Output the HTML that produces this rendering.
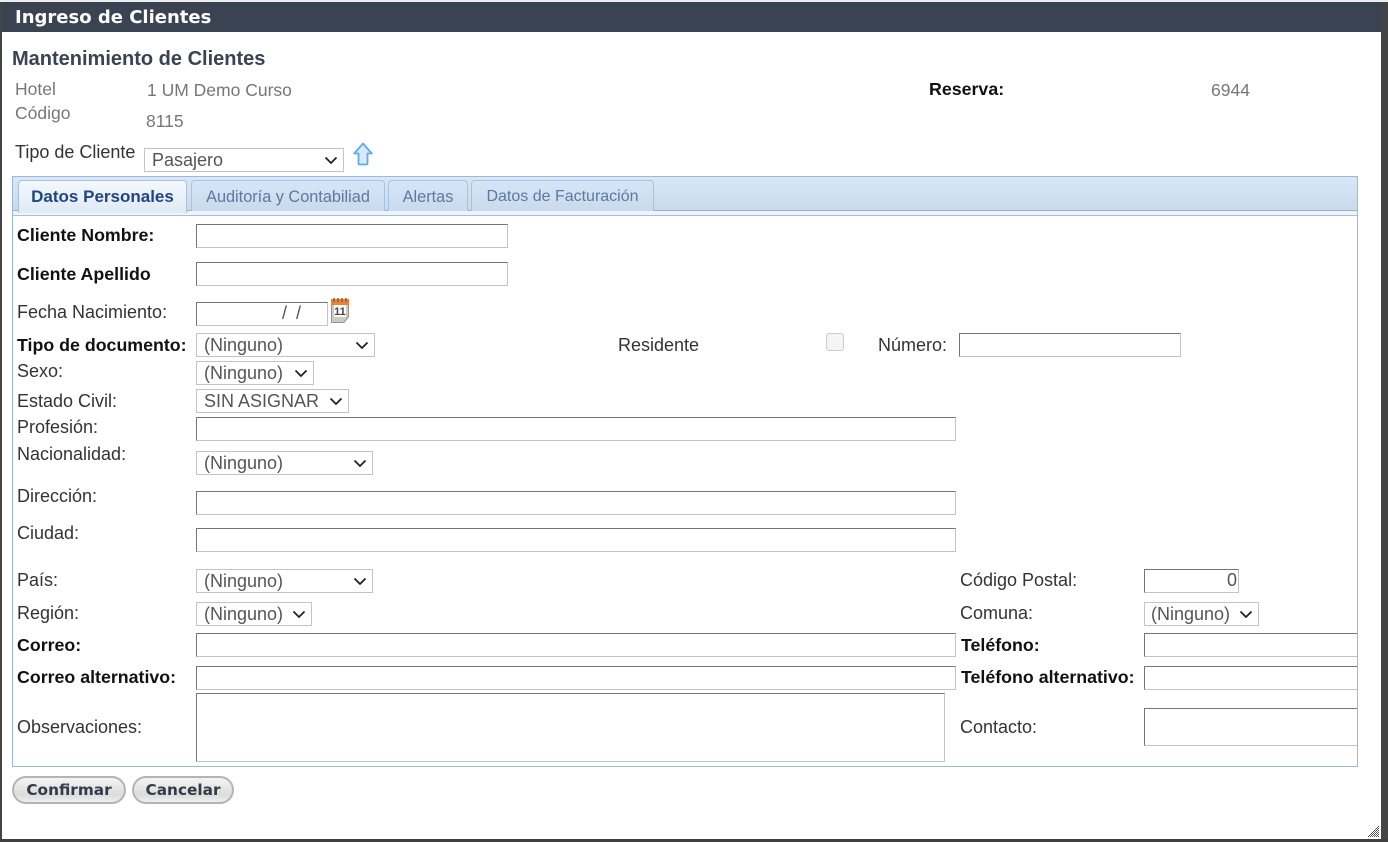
<!DOCTYPE html>
<html><head><meta charset="utf-8"><title>Ingreso de Clientes</title>
<style>
html,body{margin:0;padding:0;width:1388px;height:842px;overflow:hidden;background:#fff;font-family:"Liberation Sans",sans-serif}
.t{position:absolute;white-space:nowrap;font-size:18px;line-height:18px;color:#333}
.g{color:#777;font-size:17.500px}
.b{font-weight:bold;color:#111;font-size:17.800px}
.i{position:absolute;box-sizing:border-box;height:24px;background:#fff;border:1px solid #c4c4c4;border-top-color:#767676;border-left-color:#767676}
.s{position:absolute;box-sizing:border-box;height:24px;background:#fff;border:1px solid #c4c4c4;font-size:18px;line-height:23px;padding-left:7px;color:#555;white-space:nowrap}
.s svg{position:absolute;right:5px;top:7px}
.tab{position:absolute;box-sizing:border-box;top:180px;height:31px;border:1px solid #a9c3de;border-bottom:0;border-radius:4px 4px 0 0;background:linear-gradient(#d7e5f6,#c9daed);font-size:16.300px;line-height:32px;text-align:center;color:#5b7a9e;white-space:nowrap}
.btn{position:absolute;box-sizing:border-box;top:776px;height:28px;border:2px solid #b4b4b4;border-radius:14px;background:linear-gradient(#f4f4f4,#dcdcdc 70%,#eee);font:bold 15.300px/25px "DejaVu Sans",sans-serif;text-align:center;color:#333a48}
</style></head><body>
<svg width="0" height="0" style="position:absolute"><defs><symbol id="c" viewBox="0 0 14 9"><path d="M1.500 1.500L7 7l5.500-5.500" fill="none" stroke="#222" stroke-width="1.800"/></symbol>
<pattern id="d" width="2" height="2" patternUnits="userSpaceOnUse"><rect width="1" height="1" fill="#555"/><rect x="1" y="1" width="1" height="1" fill="#555"/></pattern></defs></svg>

<div style="position:absolute;left:0;top:0;width:2px;height:842px;background:#444"></div>
<div style="position:absolute;left:1381px;top:0;width:7px;height:842px;background:#444"></div>
<div style="position:absolute;left:0;top:839px;width:1388px;height:3px;background:#3f3f3f"></div>
<div style="position:absolute;left:0;top:0;width:1388px;height:2px;background:#eee"></div>
<div style="position:absolute;left:2px;top:2px;width:1379px;height:30px;background:#3a4352"></div>
<div class="t" style="left:15px;top:7px;font:bold 18px/21px 'DejaVu Sans',sans-serif;color:#fff">Ingreso de Clientes</div>

<div class="t" style="left:12px;top:48px;font-size:20px;line-height:22px;font-weight:bold;color:#3a4352">Mantenimiento de Clientes</div>
<div class="t g" style="left:15px;top:80px">Hotel</div>
<div class="t g" style="left:147px;top:81px">1 UM Demo Curso</div>
<div class="t b" style="left:929px;top:80px">Reserva:</div>
<div class="t g" style="left:1211px;top:81px">6944</div>
<div class="t g" style="left:15px;top:104px">Código</div>
<div class="t g" style="left:146px;top:112px">8115</div>
<div class="t" style="left:15px;top:143px">Tipo de Cliente</div>
<div class="s" style="left:144px;top:148px;width:200px">Pasajero<svg width="14" height="9"><use href="#c"/></svg></div>
<svg style="position:absolute;left:353px;top:142px" width="20" height="24" viewBox="0 0 20 24"><path d="M10 1.500L18.800 11.500H14.500V21.500Q14.500 22.500 13.500 22.500H6.500Q5.500 22.500 5.500 21.500V11.500H1.200z" fill="#d6eafc" stroke="#62abe8" stroke-width="1.800" stroke-linejoin="round"/></svg>

<div style="position:absolute;box-sizing:border-box;left:12px;top:176px;width:1346px;height:591px;border:1px solid #9db8d8"></div>
<div style="position:absolute;left:13px;top:177px;width:1344px;height:33px;background:linear-gradient(#d9e7f8,#c9daec)"></div>
<div style="position:absolute;left:13px;top:210px;width:1344px;height:6px;box-sizing:border-box;border-top:1px solid #94b3d3;border-bottom:1px solid #a5c0dc;background:#eef4fb"></div>
<div class="tab" style="left:18px;width:169px;height:33px;background:linear-gradient(#f3f8fd,#dfeaf6);font-weight:bold;font-size:17px;color:#1f4585">Datos Personales</div>
<div class="tab" style="left:191px;width:194px">Auditoría y Contabiliad</div>
<div class="tab" style="left:388px;width:80px">Alertas</div>
<div class="tab" style="left:471px;width:183px;font-size:16px">Datos de Facturación</div>

<div class="t b" style="left:17px;top:226px">Cliente Nombre:</div>
<div class="i" style="left:196px;top:224px;width:312px"></div>
<div class="t b" style="left:17px;top:265px">Cliente Apellido</div>
<div class="i" style="left:196px;top:262px;width:312px"></div>
<div class="t" style="left:17px;top:303px">Fecha Nacimiento:</div>
<div class="i" style="left:196px;top:302px;width:132px"></div>
<div class="t" style="left:282px;top:304px;color:#555;word-spacing:4px">/ /</div>
<svg style="position:absolute;left:330px;top:297px" width="20" height="27" viewBox="0 0 20 27"><path d="M1.500 4H18.500V20L14 25.500H1.500z" fill="#cfcabf" stroke="#9a9488"/><rect x="1" y="2" width="18" height="6" fill="#e8843a"/><path d="M4 1v4M8 1v4M12 1v4M16 1v4" stroke="#a5562a" stroke-width="1.500"/><rect x="4" y="8" width="12" height="12" fill="#fbfaf6"/><text x="10" y="18" font-size="11" font-weight="bold" text-anchor="middle" fill="#444" font-family="Liberation Sans">11</text></svg>
<div class="t b" style="left:17px;top:336px">Tipo de documento:</div>
<div class="s" style="left:196px;top:333px;width:179px">(Ninguno)<svg width="14" height="9"><use href="#c"/></svg></div>
<div class="t" style="left:618px;top:336px">Residente</div>
<div style="position:absolute;box-sizing:border-box;left:826px;top:333px;width:18px;height:18px;border:1px solid #ccc;border-radius:3px;background:#f5f5f5"></div>
<div class="t" style="left:878px;top:336px">Número:</div>
<div class="i" style="left:959px;top:333px;width:222px"></div>
<div class="t" style="left:17px;top:362px">Sexo:</div>
<div class="s" style="left:196px;top:361px;width:118px">(Ninguno)<svg width="14" height="9"><use href="#c"/></svg></div>
<div class="t" style="left:17px;top:392px">Estado Civil:</div>
<div class="s" style="left:196px;top:389px;width:153px">SIN ASIGNAR<svg width="14" height="9"><use href="#c"/></svg></div>
<div class="t" style="left:17px;top:418px">Profesión:</div>
<div class="i" style="left:196px;top:417px;width:760px"></div>
<div class="t" style="left:17px;top:445px">Nacionalidad:</div>
<div class="s" style="left:196px;top:451px;width:177px">(Ninguno)<svg width="14" height="9"><use href="#c"/></svg></div>
<div class="t" style="left:17px;top:487px">Dirección:</div>
<div class="i" style="left:196px;top:491px;width:760px"></div>
<div class="t" style="left:17px;top:524px">Ciudad:</div>
<div class="i" style="left:196px;top:528px;width:760px"></div>
<div class="t" style="left:17px;top:571px">País:</div>
<div class="s" style="left:196px;top:569px;width:177px">(Ninguno)<svg width="14" height="9"><use href="#c"/></svg></div>
<div class="t" style="left:960px;top:571px">Código Postal:</div>
<div class="i" style="left:1144px;top:569px;width:95px;font-size:18px;line-height:21px;text-align:right;padding-right:1px;color:#555">0</div>
<div class="t" style="left:17px;top:604px">Región:</div>
<div class="s" style="left:196px;top:602px;width:116px">(Ninguno)<svg width="14" height="9"><use href="#c"/></svg></div>
<div class="t" style="left:960px;top:604px">Comuna:</div>
<div class="s" style="left:1144px;top:602px;width:115px;padding-left:6px">(Ninguno)<svg width="14" height="9"><use href="#c"/></svg></div>
<div class="t b" style="left:17px;top:636px">Correo:</div>
<div class="i" style="left:196px;top:633px;width:760px"></div>
<div class="t b" style="left:961px;top:636px">Teléfono:</div>
<div class="i" style="left:1144px;top:633px;width:213px;border-right:0"></div>
<div class="t b" style="left:17px;top:668px">Correo alternativo:</div>
<div class="i" style="left:196px;top:666px;width:760px"></div>
<div class="t b" style="left:961px;top:668px">Teléfono alternativo:</div>
<div class="i" style="left:1144px;top:666px;width:213px;border-right:0"></div>
<div class="t" style="left:17px;top:718px">Observaciones:</div>
<div class="i" style="left:196px;top:693px;width:749px;height:69px"></div>
<div class="t" style="left:960px;top:718px">Contacto:</div>
<div class="i" style="left:1144px;top:708px;width:213px;height:38px;border-right:0"></div>

<div class="btn" style="left:12px;width:114px">Confirmar</div>
<div class="btn" style="left:132px;width:102px">Cancelar</div>
<svg style="position:absolute;left:1366px;top:824px" width="14" height="14" viewBox="0 0 14 14"><path d="M13 1V13H1z" fill="url(#d)"/></svg>
</body></html>
